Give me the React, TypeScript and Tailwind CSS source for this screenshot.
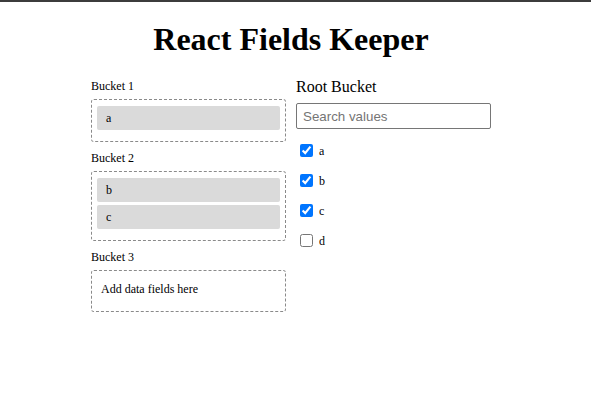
import { useState } from "react";

type Bucket = {
  id: string;
  title: string;
  items: string[];
};

const buckets: Bucket[] = [
  { id: "b1", title: "Bucket 1", items: ["a"] },
  { id: "b2", title: "Bucket 2", items: ["b", "c"] },
  { id: "b3", title: "Bucket 3", items: [] },
];

const allFields = ["a", "b", "c", "d"];

export default function App() {
  const [search, setSearch] = useState("");
  const [checked, setChecked] = useState<Record<string, boolean>>({
    a: true,
    b: true,
    c: true,
    d: false,
  });

  const filtered = allFields.filter((f) =>
    f.toLowerCase().includes(search.toLowerCase())
  );

  return (
    <div className="min-h-[419px] bg-white text-black font-['Liberation_Serif',serif]">
      <div className="h-[2px] bg-[#3c3c3c]" />

      <div className="pr-[9px]">
        <h1 className="pt-[19px] text-center text-[32px] leading-[37px] font-bold">
          React Fields Keeper
        </h1>

        <div className="mt-[21px] flex justify-center gap-[10px]">
          {/* BUCKETS */}
          <div className="w-[195px]">
            {buckets.map((b) => (
              <div key={b.id} className="mb-[9px]">
                <div className="text-[12px] leading-[14px]">{b.title}</div>
                <div className="mt-[6px] border border-dashed border-[#8a8a8a] rounded-[3px]">
                  {b.items.length === 0 ? (
                    <div className="px-[9px] pt-[11px] pb-[15px] text-[12px] leading-[14px]">
                      Add data fields here
                    </div>
                  ) : (
                    <div className="px-[5px] pt-[6px] pb-[8px]">
                      {b.items.map((item) => (
                        <div
                          key={item}
                          className="mb-[3px] h-[24px] flex items-center pl-[9px] bg-[#dadada] rounded-[2px] text-[12px]"
                        >
                          {item}
                        </div>
                      ))}
                    </div>
                  )}
                </div>
              </div>
            ))}
          </div>

          {/* ROOT BUCKET */}
          <div className="w-[195px]">
            <div className="text-[16px] leading-[18px] -mt-[1px]">Root Bucket</div>
            <input
              placeholder="Search values"
              value={search}
              onChange={(e) => setSearch(e.target.value)}
              className="mt-[7px] w-full h-[26px] px-[6px] border border-[#767676] rounded-[2px] text-[13.33px] font-['Liberation_Sans',sans-serif] placeholder:text-[#757575] outline-none"
            />

            <div className="mt-[6px]">
              {filtered.map((f) => (
                <label key={f} className="h-[30px] flex items-center">
                  <input
                    type="checkbox"
                    checked={!!checked[f]}
                    onChange={() => setChecked({ ...checked, [f]: !checked[f] })}
                    className="ml-[4px] mr-[6px] w-[13px] h-[13px]"
                  />
                  <span className="text-[12px] translate-y-[1px]">{f}</span>
                </label>
              ))}
            </div>
          </div>
        </div>
      </div>
    </div>
  );
}
